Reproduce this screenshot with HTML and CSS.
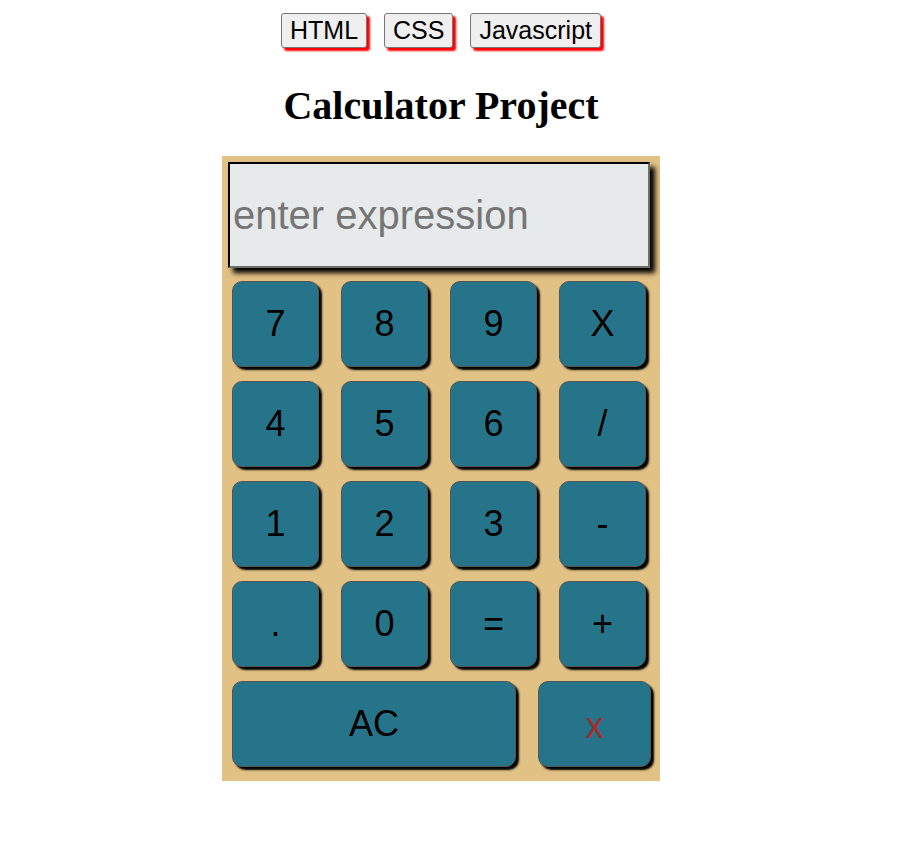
FILE: index.html
```html
<!DOCTYPE html>
<html lang="en">
<head>
<meta charset="utf-8">
<title>Calculator Project</title>
<link rel="stylesheet" href="styles.css">
</head>
<body>
<div class="page">
  <nav class="tabs">
    <button class="tab">HTML</button>
    <button class="tab">CSS</button>
    <button class="tab">Javascript</button>
  </nav>
  <h1 class="title">Calculator Project</h1>
  <div class="calc">
    <input class="display" type="text" placeholder="enter expression">
    <div class="keys">
      <button class="key">7</button>
      <button class="key">8</button>
      <button class="key">9</button>
      <button class="key">X</button>
      <button class="key">4</button>
      <button class="key">5</button>
      <button class="key">6</button>
      <button class="key">/</button>
      <button class="key">1</button>
      <button class="key">2</button>
      <button class="key">3</button>
      <button class="key">-</button>
      <button class="key">.</button>
      <button class="key">0</button>
      <button class="key">=</button>
      <button class="key">+</button>
    </div>
    <div class="bottom-row">
      <button class="key key-ac">AC</button>
      <button class="key key-del">x</button>
    </div>
  </div>
</div>
</body>
</html>
```

FILE: styles.css
```css
html, body {
  margin: 0;
  padding: 0;
  background: #ffffff;
}

.page {
  width: 882px;
  font-family: "Liberation Sans", Arial, sans-serif;
}

.tabs {
  display: flex;
  justify-content: center;
  gap: 17px;
  padding-top: 13px;
}

.tab {
  font-family: "Liberation Sans", Arial, sans-serif;
  font-size: 25px;
  line-height: 29px;
  padding: 2px 8px;
  color: #000;
  background: #efefef;
  border: 1px solid #767676;
  border-radius: 3px;
  box-shadow: 3px 3px 2px #ff0000;
}

.title {
  font-family: "Liberation Serif", "Times New Roman", serif;
  font-weight: bold;
  font-size: 40px;
  line-height: 46px;
  text-align: center;
  margin: 35px 0 27px;
  color: #000;
}

.calc {
  width: 438px;
  box-sizing: border-box;
  margin: 0 auto;
  background: #e2c185;
  padding: 6px 8px 14px 6px;
}

.display {
  display: block;
  box-sizing: border-box;
  width: 422px;
  height: 106px;
  margin: 0;
  padding: 1px 3px;
  border: 2px inset #767676;
  border-top-color: #1c1c1c;
  border-left-color: #1c1c1c;
  border-right-color: #6e6e6e;
  border-bottom-color: #6e6e6e;
  background: #e7eaeb;
  font-family: "Liberation Sans", Arial, sans-serif;
  font-size: 40px;
  color: #000;
  box-shadow: 5px 5px 5px #000;
  outline: none;
}

.display::placeholder {
  color: #757575;
}

.keys {
  display: grid;
  grid-template-columns: repeat(4, 87px);
  grid-auto-rows: 86px;
  column-gap: 22px;
  row-gap: 14px;
  margin: 13px 0 0 4px;
}

.key {
  box-sizing: border-box;
  margin: 0;
  padding: 0;
  background: #267489;
  border: 1px solid #555555;
  border-radius: 10px;
  box-shadow: 3px 3px 2px #000;
  font-family: "Liberation Sans", Arial, sans-serif;
  font-size: 36px;
  color: #000;
}

.bottom-row {
  display: flex;
  gap: 22px;
  margin: 14px 0 0 4px;
}

.bottom-row .key {
  height: 86px;
}

.key-ac {
  width: 284px;
}

.key-del {
  width: 113px;
  color: #a52a2a;
  padding-top: 4px;
}
```
